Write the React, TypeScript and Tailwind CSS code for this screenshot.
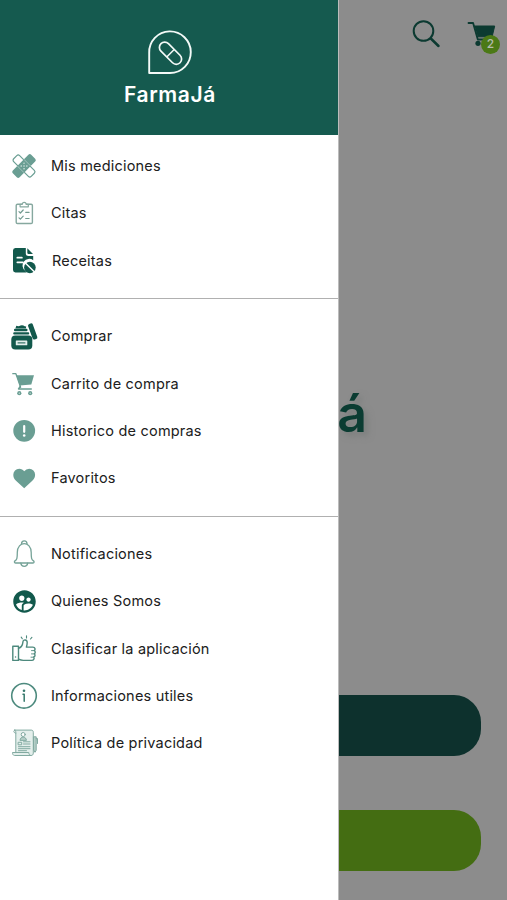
import React from "react";
import { MdSupervisedUserCircle } from "react-icons/md";

const SAGE = "#6a9e93";
const DEEP = "#12594c";

function Icon({ children }: { children: React.ReactNode }) {
  return (
    <svg viewBox="0 0 32 32" className="h-8 w-8 shrink-0" fill="none" strokeLinecap="round" strokeLinejoin="round">
      {children}
    </svg>
  );
}

const Bandages = () => (
  <Icon>
    <g transform="rotate(45 16 16)">
      <rect x="3.6" y="11.8" width="24.8" height="8.4" rx="2" stroke={SAGE} strokeWidth="1.2" />
    </g>
    <g transform="rotate(-45 16 16)">
      <rect x="3" y="11.2" width="26" height="9.6" rx="2" fill={SAGE} />
      <path d="M14 14h.1M18 14h.1M14 18h.1M18 18h.1M16 16h.1" stroke="#e6f1ee" strokeWidth="1.300" />
      <path d="M11.300 11.700v8.600M20.700 11.700v8.600" stroke="#b5d0ca" strokeWidth=".7" />
    </g>
  </Icon>
);

const Clipboard = () => (
  <Icon>
    <rect x="8.2" y="7.2" width="16.200" height="19.300" rx="1.3" stroke="#86a89f" strokeWidth="1.4" />
    <path d="M12.1 9.8V7.3h2.2c0-2.6 3.8-2.6 3.8 0h2.2v2.5z" fill="#fff" stroke="#86a89f" strokeWidth="1.2" />
    <path d="m11 14.600 1.400 1.400 2.800-3M11 20.800l1.400 1.400 2.800-3M17.700 15.300h3.400M17.700 21.500h3.400" stroke="#739b91" strokeWidth="1.2" />
  </Icon>
);

const Prescription = () => (
  <Icon>
    <path d="M7.6 3h10.2v5.4a2.5 2.5 0 0 0 2.5 2.5h4.900v4.300a6.600 6.600 0 0 0-8 10.600q.6.9 1.500 1.600H7.600A2.500 2.500 0 0 1 5 25V5.500A2.500 2.500 0 0 1 7.600 3z" fill={DEEP} />
    <path d="m19.300 3.200 5.700 5.700h-4.500a1.200 1.200 0 0 1-1.200-1.200z" fill={DEEP} />
    <path d="M9.300 12.700h4.600M9.300 17.300h5.600" stroke="#fff" strokeWidth="1.7" />
    <circle cx="21.900" cy="22.500" r="5.800" fill={DEEP} />
    <path d="m17.600 18.300 8.700 8.500" stroke="#fff" strokeWidth="1.5" />
  </Icon>
);

const Jar = () => (
  <Icon>
    <path d="M8.300 5.700q2.300 1 4.200-.3 2.600-.6 4.200.8l1.500.3-.3 2H7.400z" fill={DEEP} />
    <rect x="6" y="8.800" width="13.500" height="2.500" rx="1" fill={DEEP} />
    <rect x="5.200" y="12.300" width="16" height="2.200" rx="1" fill={DEEP} />
    <rect x="3.300" y="15.500" width="21" height="13.900" rx="4" fill={DEEP} />
    <rect x="7.800" y="20.500" width="11.500" height="4.800" rx=".6" fill="#e2efec" />
    <path d="M10 22.900h7" stroke={DEEP} strokeWidth="1" />
    <rect x="22.200" y="3.200" width="5" height="16.500" rx="1.800" fill={DEEP} transform="rotate(-20 24.700 11.500)" />
  </Icon>
);

const Cart = () => (
  <Icon>
    <path d="M4.800 5.700h3.100l4.700 13.600" stroke={SAGE} strokeWidth="1.300" />
    <path d="M8.400 7.200H26l-2.700 9.300-11.600 1z" fill={SAGE} />
    <path d="M12.400 18.200 10.500 21h12.800" stroke={SAGE} strokeWidth="1.400" />
    <circle cx="11.300" cy="25.200" r="2.100" fill={SAGE} />
    <circle cx="22.200" cy="25.200" r="2.100" fill={SAGE} />
    <circle cx="11.300" cy="25.200" r=".6" fill="#d7e8e4" />
    <circle cx="22.200" cy="25.200" r=".6" fill="#d7e8e4" />
  </Icon>
);

const Alert = () => (
  <Icon>
    <circle cx="16.200" cy="15.800" r="10.900" fill={SAGE} />
    <path d="M16.200 11v5.800" stroke="#fff" strokeWidth="2.200" />
    <circle cx="16.200" cy="20.500" r="1.300" fill="#fff" />
  </Icon>
);

const Heart = () => (
  <Icon>
    <path d="M16.200 26.300 8 18.700C5.800 16.600 5.300 14.600 5.300 12.700A5.900 5.900 0 0 1 11.200 6.700c2 0 3.900 1 5 2.600a6.200 6.200 0 0 1 5-2.600 5.900 5.900 0 0 1 5.900 6c0 1.900-.6 3.900-2.800 6z" fill={SAGE} />
  </Icon>
);

const Bell = () => (
  <Icon>
    <g stroke="#76a398" strokeWidth="1.300">
      <path d="M13.500 5.800c0-3.800 5.500-3.800 5.500 0" />
      <path d="M9.300 14.500c0-11.800 13.900-11.800 13.900 0 0 5.700.3 7.200 2.300 8.400.9.600.8 2.100-.5 2.100H7.500c-1.300 0-1.400-1.500-.5-2.100 2-1.200 2.300-2.700 2.300-8.400z" />
      <path d="M12.800 25.200c.6 4.300 6.300 4.300 6.900 0" />
    </g>
  </Icon>
);

const People = () => (
  <span className="flex h-8 w-8 shrink-0 items-center justify-center">
    <MdSupervisedUserCircle size={27} color={DEEP} />
  </span>
);

const Thumb = () => (
  <Icon>
    <g stroke="#4d897d" strokeWidth="1.400">
      <path d="M4.800 13.300h5.700v14.100H4.800zM7.500 24h.1" />
      <path d="M10.500 15.200c2.600-.6 4.100-2.600 4.500-6.600.3-2.500 4.200-2.200 4.200 1 0 1.800-.4 3.200-.8 4.500h6.500c2.300 0 2.800 2.600 1.300 3.400 1.400 1 1.300 2.700.1 3.300 1.200 1.100.8 2.700-.5 3.200.8 1.400 0 3.400-2 3.400h-8.500q-2.300 0-4.800-1.200" />
      <path d="M23.500 17.600h2.400M23.500 20.900h2.400M23 24.200h2.600" strokeWidth=".9" />
      <path d="M18.500 5V2.800M14.300 5.700l-1.100-1.600M22.500 6l1.400-1.700" strokeWidth="1.100" />
    </g>
  </Icon>
);

const Info = () => (
  <Icon>
    <circle cx="16" cy="15.800" r="12.300" stroke="#4d8a7e" strokeWidth="1.600" />
    <circle cx="16" cy="10.800" r="1.300" fill="#37796c" />
    <path d="M15 14.200h1.200v7" stroke="#37796c" strokeWidth="1.500" />
  </Icon>
);

const Policy = () => (
  <Icon>
    <g stroke="#82aaa1" strokeWidth="1">
      <path d="M7.800 25.400V5.300c0-1.300-.5-2.200-1.800-2.200h17.300c1.300 0 2 .9 2 2.200v20.800c0 1.600-.9 2.400-2.200 2.400H6.500c-1.300 0-2-1.300-2-3h16.300c0 1.700.8 3 2.100 3" fill="#e4efec" />
      <path d="M7.800 6.200C5.500 6.200 5 3.300 7 3.100" />
      <circle cx="15.200" cy="7.500" r="2" fill="#fff" />
      <path d="M12 13c.3-4 6.100-4 6.400 0z" fill="#b4cec7" />
      <path d="M10.500 15.300h3.200v2.500h-3.200zM15.500 14.800h6.500M15.500 17h6.500M10.500 19.700h11.500M10.500 21.700h11.500M10.500 23.700h8" />
      <path d="M25.800 9.800h2.400v13.500l-1.200 2-1.200-2zM28.200 11.500h1.300v5" fill="#b4cec7" />
    </g>
  </Icon>
);

type Item = { label: string; icon: React.ComponentType; className?: string };

const sections: Item[][] = [
  [
    { label: "Mis mediciones", icon: Bandages },
    { label: "Citas", icon: Clipboard },
    { label: "Receitas", icon: Prescription, className: "pl-px" },
  ],
  [
    { label: "Comprar", icon: Jar },
    { label: "Carrito de compra", icon: Cart },
    { label: "Historico de compras", icon: Alert },
    { label: "Favoritos", icon: Heart },
  ],
  [
    { label: "Notificaciones", icon: Bell },
    { label: "Quienes Somos", icon: People },
    { label: "Clasificar la aplicación", icon: Thumb },
    { label: "Informaciones utiles", icon: Info },
    { label: "Política de privacidad", icon: Policy },
  ],
];

function Backdrop() {
  return (
    <main className="flex h-full flex-col bg-[#8c8c8c]">
      <div className="flex h-[68px] items-center justify-end gap-[26px] pr-[6px]">
        <svg viewBox="0 0 30 30" className="h-[30px] w-[30px]" fill="none" stroke="#0c3a31" strokeLinecap="round">
          <circle cx="12.500" cy="12" r="9.800" strokeWidth="2" />
          <path d="m19.800 19.500 7.700 7.500" strokeWidth="2.500" />
        </svg>
        <div className="relative h-[34px] w-[34px]">
          <svg viewBox="0 0 34 34" className="h-[34px] w-[34px]" fill="none" stroke="#0c3a31" strokeLinecap="round" strokeLinejoin="round">
            <path d="M1.500 6h4.600l4.700 16.500h15" strokeWidth="1.800" />
            <path d="M7.500 9h20.200l-2.600 10.800H10.800z" fill="#0c3a31" strokeWidth="1" />
            <circle cx="11" cy="26.300" r="2.600" fill="#0c3a31" stroke="none" />
          </svg>
          <span className="absolute left-[14px] top-[17.500px] flex h-[19px] w-[19px] items-center justify-center rounded-full bg-[#4b7916] font-['Inter',sans-serif] text-[12px] font-medium text-[#b5bbae]">
            2
          </span>
        </div>
      </div>
      <div className="mt-[306px] flex h-[80px] items-center justify-end pr-[140px]">
        <span className="font-['Inter',sans-serif] text-[52px] leading-none font-semibold text-[#0b3c32] [text-shadow:4px_4px_6px_#7b7e7d]">á</span>
      </div>
      <div className="mt-[241px] flex flex-col gap-[54px] pr-[26px] pl-[26px]">
        <div className="h-[61px] rounded-[27px] bg-[#0d312d]" />
        <div className="h-[61px] rounded-[27px] bg-[#446d12]" />
      </div>
    </main>
  );
}

function Drawer() {
  return (
    <aside className="absolute inset-y-0 left-0 flex w-[339px] flex-col border-r border-[#bcbcbc] bg-white">
      <header className="flex h-[135px] flex-col items-center bg-[#155a4f] pt-[30px]">
        <svg viewBox="0 0 46 46" className="ml-[2px] h-[46px] w-[46px]" fill="none" stroke="#f4faf8" strokeLinejoin="round">
          <path d="M2.200 43V23A20.800 20.800 0 1 1 23 43z" strokeWidth="1.900" />
          <g transform="rotate(45 23 23)">
            <rect x="10" y="17.500" width="27" height="10.600" rx="5.300" strokeWidth="1.700" />
            <path d="M23.500 17.500v10.600" strokeWidth="1.500" />
          </g>
        </svg>
        <h1 className="mt-[7px] ml-[2px] font-['Inter',sans-serif] text-[21px] leading-[24px] font-semibold tracking-[0.600px] text-white">FarmaJá</h1>
      </header>
      <nav className="flex flex-col pt-[7.200px] font-['Inter',sans-serif] text-[14.500px] tracking-[0.200px] text-[#202020]">
        {sections.map((items, i) => (
          <ul key={i} className={i < 2 ? "mb-[13.600px] border-b border-[#b0b0b0] pb-[13.800px]" : ""}>
            {items.map(({ label, icon: Glyph, className }) => (
              <li key={label} className="flex h-[47.330px] items-center gap-[11px] pl-2">
                <Glyph />
                <span className={`whitespace-nowrap ${className ?? ""}`}>{label}</span>
              </li>
            ))}
          </ul>
        ))}
      </nav>
    </aside>
  );
}

export default function App() {
  return (
    <div className="relative h-[900px] w-[507px] overflow-hidden">
      <Backdrop />
      <Drawer />
    </div>
  );
}
